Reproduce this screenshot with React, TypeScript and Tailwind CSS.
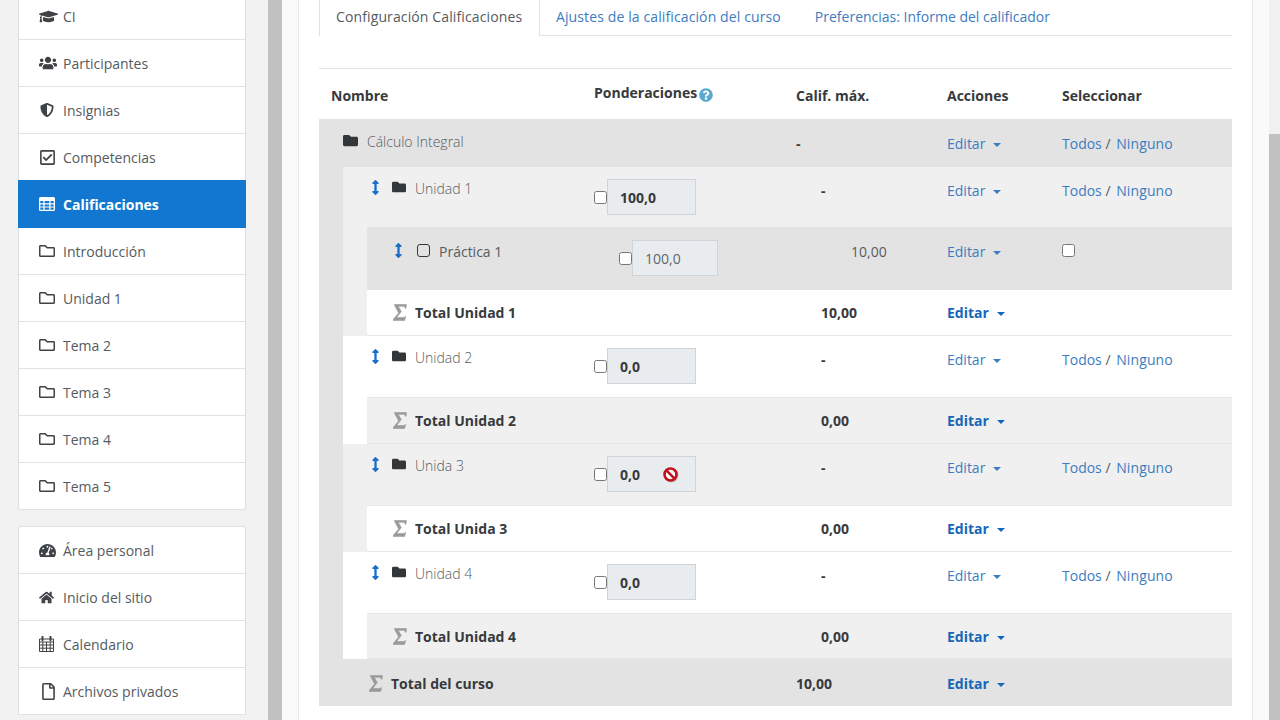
import type { ReactNode } from "react";
import {
  FaArrowsAltV,
  FaFolder,
  FaGraduationCap,
  FaHome,
  FaQuestionCircle,
  FaRegCheckSquare,
  FaRegFile,
  FaRegFolder,
  FaShieldAlt,
  FaTachometerAlt,
  FaUsers,
} from "react-icons/fa";

function TableIcon() {
  return (
    <svg viewBox="0 0 16 14" className="h-[14px] w-[16px]">
      <path
        fillRule="evenodd"
        fill="currentColor"
        d="M1.5 0h13A1.5 1.5 0 0 1 16 1.500v11a1.500 1.500 0 0 1-1.500 1.500h-13A1.500 1.500 0 0 1 0 12.500v-11A1.500 1.500 0 0 1 1.500 0ZM1.300 4v2.200h3V4Zm4.300 0v2.200h4.600V4Zm5.900 0v2.200h3.200V4ZM1.300 7.400v2h3v-2Zm4.300 0v2h4.600v-2Zm5.900 0v2h3.200v-2ZM1.300 10.600v2.100h3v-2.100Zm4.300 0v2.100h4.600v-2.100Zm5.900 0v2.100h3.200v-2.100Z"
      />
    </svg>
  );
}

function CalendarIcon() {
  return (
    <svg viewBox="0 0 15 16" className="h-[16px] w-[15px]" fill="none" stroke="currentColor" strokeWidth="1">
      <path d="M.5 3h14v12.500H.5ZM.5 6h14M.5 9h14M.5 12.200h14M3.800 6v9.500M7.500 6v9.500M11.200 6v9.500" />
      <path d="M3.500.8v3.400M11.500.8v3.400" strokeWidth="2" strokeLinecap="round" />
    </svg>
  );
}

const courseNav = [
  { label: "Participantes", icon: <FaUsers className="text-[18px]" /> },
  { label: "Insignias", icon: <FaShieldAlt className="ml-[1px] text-[14px]" /> },
  { label: "Competencias", icon: <FaRegCheckSquare className="text-[17px]" /> },
];

const sections = ["Introducción", "Unidad 1", "Tema 2", "Tema 3", "Tema 4", "Tema 5"];

const siteNav = [
  { label: "Área personal", icon: <FaTachometerAlt className="text-[17px]" /> },
  { label: "Inicio del sitio", icon: <FaHome className="text-[15px]" /> },
  { label: "Calendario", icon: <CalendarIcon /> },
  { label: "Archivos privados", icon: <FaRegFile className="ml-[1px] text-[17px]" /> },
];

function NavItem({ icon, label }: { icon: ReactNode; label: string }) {
  return (
    <div className="flex h-[47px] items-center border-b border-[#dee2e6] pl-[20px] text-[#555b60]">
      <span className="flex w-[24px] shrink-0 text-[16px] text-[#3f4347]">{icon}</span>
      {label}
    </div>
  );
}

function Sidebar() {
  return (
    <aside className="flex w-[268px] shrink-0 flex-col gap-[16px] bg-[#f2f2f2] pl-[18px]">
      <div className="w-[228px] rounded-b-[3px] border-x border-b border-[#dee2e6] bg-white">
        <div className="flex h-[40px] items-start border-b border-[#dee2e6] pl-[20px] text-[#555b60]">
          <span className="flex w-[24px] shrink-0 pt-[7px] text-[19px] text-[#3f4347]">
            <FaGraduationCap />
          </span>
          <span className="pt-[6px]">CI</span>
        </div>
        {courseNav.map((item) => (
          <NavItem key={item.label} {...item} />
        ))}
        <div className="-mx-px -mt-px flex h-[48px] items-center bg-[#1177d1] pl-[21px] font-bold text-white">
          <span className="flex w-[24px] shrink-0">
            <TableIcon />
          </span>
          Calificaciones
        </div>
        {sections.map((label, i) => (
          <div
            key={label}
            className={
              i === sections.length - 1
                ? "flex h-[46px] items-center pl-[20px] text-[#555b60]"
                : "flex h-[47px] items-center border-b border-[#dee2e6] pl-[20px] text-[#555b60]"
            }
          >
            <span className="flex w-[24px] shrink-0 text-[16px] text-[#3f4347]">
              <FaRegFolder />
            </span>
            {label}
          </div>
        ))}
      </div>
      <div className="w-[228px] rounded-t-[3px] border-x border-t border-[#dee2e6] bg-white">
        {siteNav.map((item) => (
          <NavItem key={item.label} {...item} />
        ))}
      </div>
    </aside>
  );
}

function Caret() {
  return (
    <span className="ml-[8px] inline-block h-0 w-0 border-x-[4.5px] border-t-[4.5px] border-x-transparent border-t-current align-[2px]" />
  );
}

function Editar({ bold }: { bold?: boolean }) {
  return (
    <span className={bold ? "font-bold text-[#1567b8]" : "text-[#3d7cc0]"}>
      Editar
      <Caret />
    </span>
  );
}

function TodosNinguno() {
  return (
    <span className="text-[#555b60]">
      <span className="text-[#3d7cc0]">Todos</span> /{" "}
      <span className="ml-[2px] tracking-[0.1px] text-[#3d7cc0]">Ninguno</span>
    </span>
  );
}

function Sigma() {
  return (
    <svg viewBox="0 0 14 17" className="h-[17px] w-[14px] shrink-0">
      <path
        d="M1.500 .5H13.500L13 4.200H12.200C12 2.600 11.300 2.200 9.800 2.200H5.200L8.300 7.600 3.600 13.600H10.200C11.200 13.600 11.700 13.200 12.100 12.400H12.700L11.600 16.500H0V15.800L5.600 8.900 1.500 1.200Z"
        fill="#9a9a9a"
        stroke="#9a9a9a"
        strokeWidth="0.6"
      />
    </svg>
  );
}

function Weight({ value, bold, ban }: { value: string; bold?: boolean; ban?: boolean }) {
  return (
    <div className="flex items-center">
      <input type="checkbox" className="m-0 h-[13px] w-[13px] shrink-0" />
      <div className="relative">
        <input
          readOnly
          value={value}
          className={
            bold
              ? "h-[36px] w-[89px] border border-[#ced4da] bg-[#e9ecef] pl-[12px] font-bold text-[#373a3c]"
              : "h-[36px] w-[86px] border border-[#ced4da] bg-[#e9ecef] pl-[12px] text-[#60666b]"
          }
        />
        {ban && (
          <svg viewBox="0 0 18 18" className="absolute top-[10px] left-[55px] h-[18px] w-[18px]">
            <circle cx="9.500" cy="9.500" r="7" fill="#888" opacity="0.45" />
            <circle cx="8.500" cy="8.500" r="6" fill="#fff" stroke="#c1121c" strokeWidth="2.600" />
            <path d="M4.400 4.400 12.600 12.600" stroke="#c1121c" strokeWidth="2.600" />
          </svg>
        )}
      </div>
    </div>
  );
}

function CategoryRow({ name, weight, ban, first }: { name: string; weight: string; ban?: boolean; first?: boolean }) {
  return (
    <div className={first ? "flex h-[60px]" : "flex h-[61px]"}>
      <div className="flex w-[251px] shrink-0 items-start pt-[11px] pl-[26px] font-light text-[#555b60]">
        <span className="flex w-[23px] shrink-0 pt-[2px] text-[15px] text-[#1a70c8]">
          <FaArrowsAltV className="-ml-[1px]" />
        </span>
        <span className="flex w-[23px] shrink-0 pt-[2px] text-[14px] text-[#34373a]">
          <FaFolder />
        </span>
        {name}
      </div>
      <div className="w-[227px] shrink-0 pt-[12px]">
        <Weight value={weight} bold ban={ban} />
      </div>
      <div className="w-[126px] shrink-0 pt-[13px] font-bold text-[#373a3c]">-</div>
      <div className="w-[115px] shrink-0 pt-[13px]">
        <Editar />
      </div>
      <div className="pt-[13px]">
        <TodosNinguno />
      </div>
    </div>
  );
}

function TotalRow({ name, total, shade, short }: { name: string; total: string; shade: string; short?: boolean }) {
  return (
    <div
      className={`flex items-center border-y border-[#e4e6e8] font-bold text-[#373a3c] ${shade} ${
        short ? "h-[46px]" : "h-[47px]"
      }`}
    >
      <div className="flex w-[454px] shrink-0 items-center gap-[8px] pl-[26px]">
        <Sigma />
        {name}
      </div>
      <div className="w-[126px] shrink-0">{total}</div>
      <Editar bold />
    </div>
  );
}

function GradesTable() {
  return (
    <div className="mt-[32px] border-t border-[#dee2e6]">
      <div className="flex h-[50px] font-bold text-[#373a3c]">
        <div className="w-[275px] shrink-0 pt-[16px] pl-[12px]">Nombre</div>
        <div className="flex w-[202px] shrink-0 items-start pt-[13px]">
          Ponderaciones
          <FaQuestionCircle className="mt-[6px] ml-[2px] text-[14px] text-[#5aa9d0]" />
        </div>
        <div className="w-[151px] shrink-0 pt-[16px]">Calif. máx.</div>
        <div className="w-[115px] shrink-0 pt-[16px]">Acciones</div>
        <div className="pt-[16px]">Seleccionar</div>
      </div>
      <div className="bg-[#e3e3e3]">
        <div className="flex h-[48px]">
          <div className="flex w-[477px] shrink-0 items-start pt-[12px] pl-[24px] font-light text-[#555b60]">
            <span className="flex w-[24px] shrink-0 pt-[2px] text-[15px] text-[#34373a]">
              <FaFolder />
            </span>
            Cálculo Integral
          </div>
          <div className="w-[151px] shrink-0 pt-[14px] font-bold text-[#373a3c]">-</div>
          <div className="w-[115px] shrink-0 pt-[14px]">
            <Editar />
          </div>
          <div className="pt-[14px]">
            <TodosNinguno />
          </div>
        </div>
        <div className="ml-[24px]">
          <div className="bg-[#f0f0f0]">
            <CategoryRow name="Unidad 1" weight="100,0" first />
            <div className="ml-[24px]">
              <div className="flex h-[62px] bg-[#e3e3e3]">
                <div className="flex w-[252px] shrink-0 items-start pt-[14px] pl-[25px] text-[#555b60]">
                  <span className="flex w-[25px] shrink-0 pt-[2px] text-[15px] text-[#1a70c8]">
                    <FaArrowsAltV className="-ml-[1px]" />
                  </span>
                  <span className="w-[22px] shrink-0 pt-[3px]">
                    <span className="block h-[13px] w-[13px] rounded-[3px] border-[1.5px] border-[#34373a]" />
                  </span>
                  Práctica 1
                </div>
                <div className="w-[232px] shrink-0 pt-[13px]">
                  <Weight value="100,0" />
                </div>
                <div className="w-[96px] shrink-0 pt-[14px] text-[#555b60]">10,00</div>
                <div className="w-[115px] shrink-0 pt-[14px]">
                  <Editar />
                </div>
                <div className="pt-[14px]">
                  <input type="checkbox" className="m-0 h-[13px] w-[13px]" />
                </div>
              </div>
              <TotalRow name="Total Unidad 1" total="10,00" shade="bg-white" />
            </div>
          </div>
          <div className="bg-white">
            <CategoryRow name="Unidad 2" weight="0,0" />
            <div className="ml-[24px]">
              <TotalRow name="Total Unidad 2" total="0,00" shade="bg-[#f0f0f0]" />
            </div>
          </div>
          <div className="bg-[#f0f0f0]">
            <CategoryRow name="Unida 3" weight="0,0" ban />
            <div className="ml-[24px]">
              <TotalRow name="Total Unida 3" total="0,00" shade="bg-white" />
            </div>
          </div>
          <div className="bg-white">
            <CategoryRow name="Unidad 4" weight="0,0" />
            <div className="ml-[24px]">
              <TotalRow name="Total Unidad 4" total="0,00" shade="bg-[#f0f0f0]" short />
            </div>
          </div>
        </div>
        <div className="flex h-[47px] items-center pt-px font-bold text-[#373a3c]">
          <div className="flex w-[477px] shrink-0 items-center gap-[8px] pl-[50px]">
            <Sigma />
            Total del curso
          </div>
          <div className="w-[151px] shrink-0">10,00</div>
          <Editar bold />
        </div>
      </div>
    </div>
  );
}

export default function App() {
  return (
    <div className="flex h-[720px] w-[1280px] overflow-hidden bg-[#fafafa] font-['Open_Sans',sans-serif] text-[14px]">
      <Sidebar />
      <div className="w-[14px] shrink-0 bg-[#c1c1c1]" />
      <main className="flex-1 pl-[16px]">
        <div className="h-full w-[955px] border-x border-[#e9e9e9] bg-white px-[20px]">
          <div className="flex h-[36px] border-b border-[#dee2e6]">
            <div className="-mb-px w-[221px] border-x border-[#dee2e6] bg-white pt-[6px] pl-[16px] tracking-[0.12px] text-[#555b60]">
              Configuración Calificaciones
            </div>
            <div className="pt-[6px] pl-[16px] tracking-[0.115px] text-[#3d7cc0]">Ajustes de la calificación del curso</div>
            <div className="pt-[6px] pl-[34px] text-[#3d7cc0]">Preferencias: Informe del calificador</div>
          </div>
          <GradesTable />
        </div>
      </main>
      <div className="flex w-[11px] shrink-0 flex-col">
        <div className="h-[134px] bg-[#f1f1f1]" />
        <div className="flex-1 bg-[#c1c1c1]" />
      </div>
    </div>
  );
}
